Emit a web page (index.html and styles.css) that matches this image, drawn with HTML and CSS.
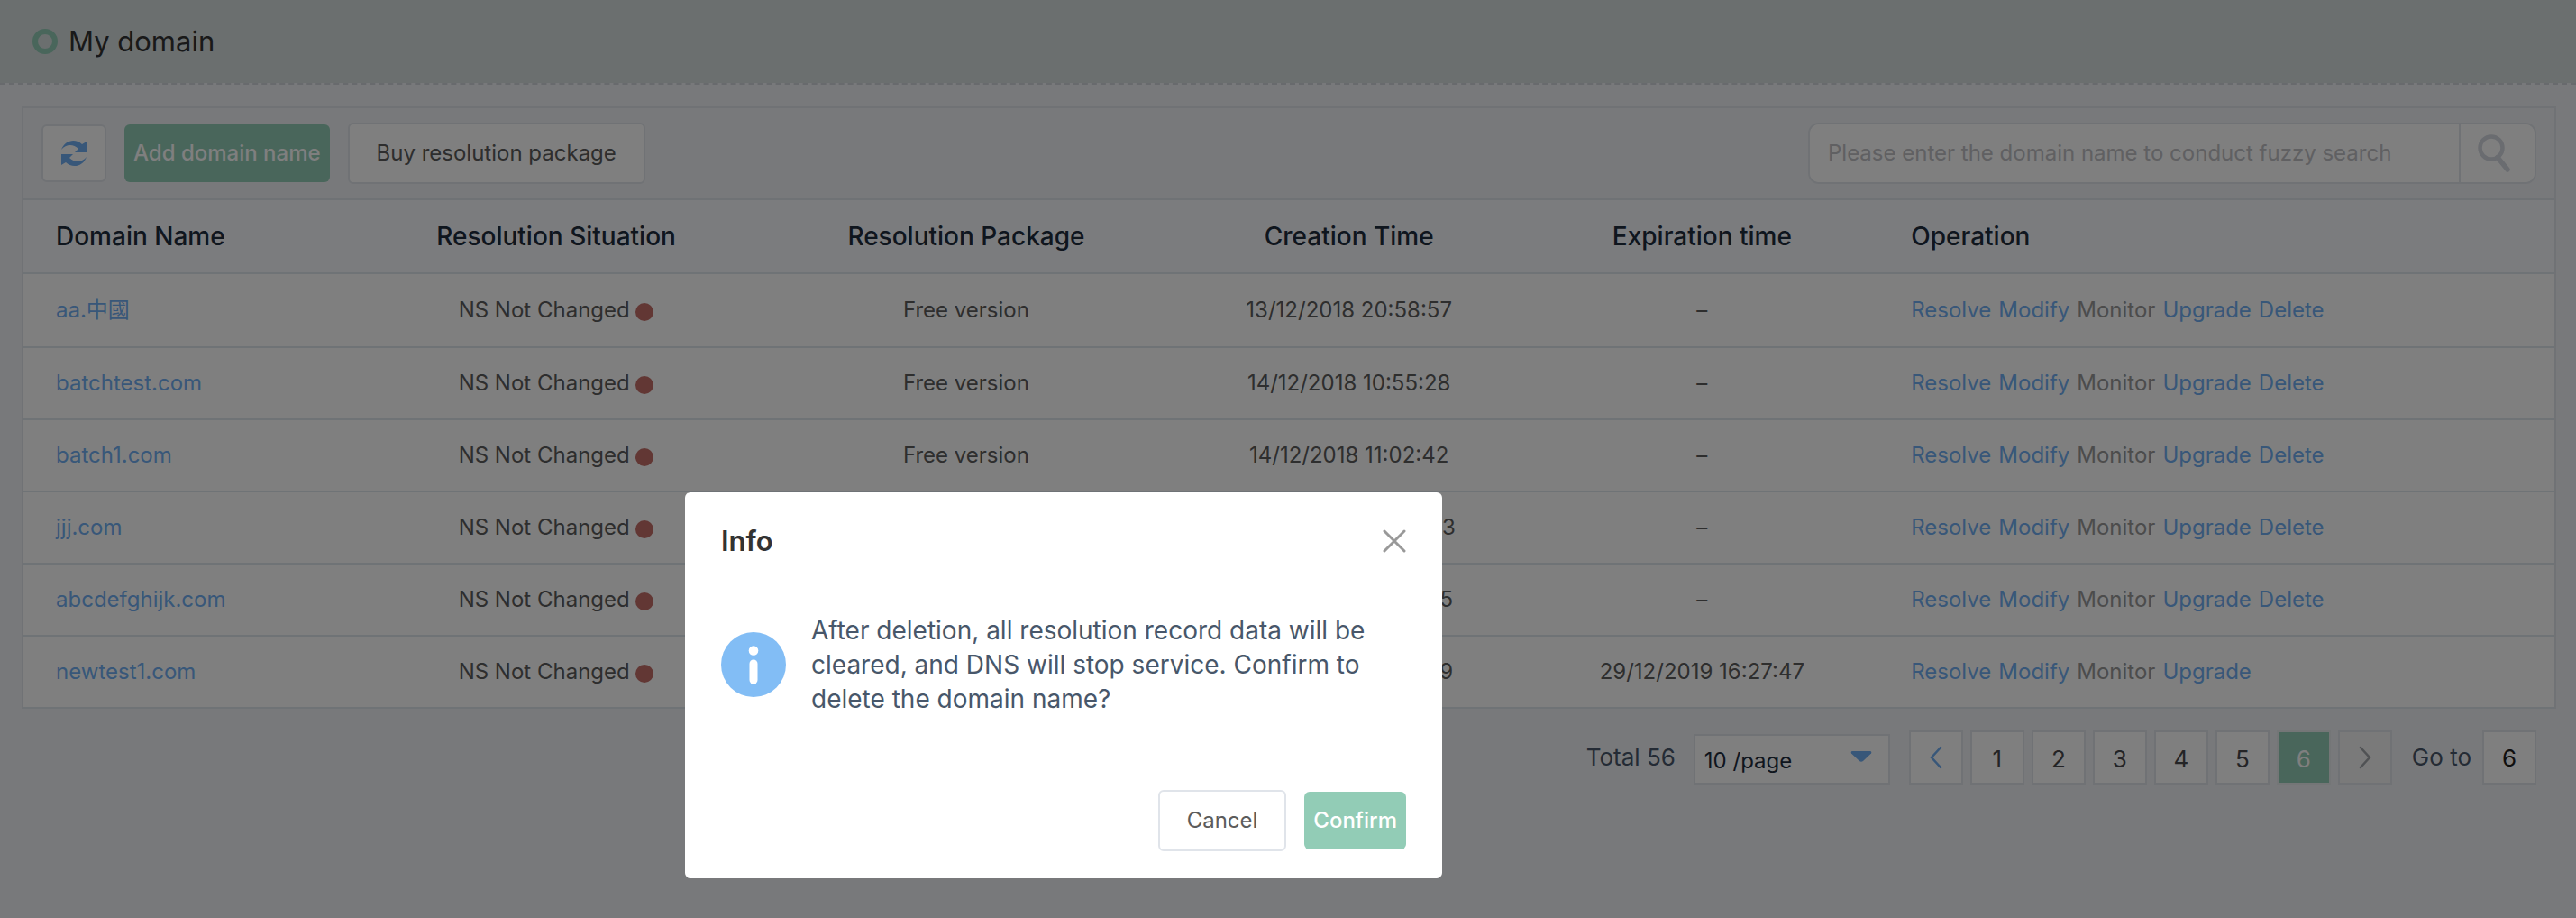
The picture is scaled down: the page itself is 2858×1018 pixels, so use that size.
FILE: index.html
```html
<!DOCTYPE html>
<html lang="en">
<head>
<meta charset="utf-8">
<title>My domain</title>
<link rel="stylesheet" href="styles.css">
</head>
<body>
<header class="page-header">
  <span class="ring"></span>
  <h1 class="page-title">My domain</h1>
</header>
<main class="content">
  <section class="panel">
    <div class="toolbar">
      <button class="btn btn-icon" type="button" aria-label="Refresh">
        <svg width="30" height="32" viewBox="0 0 30 32" fill="currentColor"><path d="M1 12C5 1 17-1 24 6l5-3v12H16l4-4C14 5 6 6 1 12z"/><path d="M29 20C25 31 13 33 6 26l-5 3V17h13l-4 4c6 6 14 5 19-1z"/></svg>
      </button>
      <button class="btn btn-primary" type="button">Add domain name</button>
      <button class="btn btn-plain" type="button">Buy resolution package</button>
      <form class="search">
        <input class="search-input" type="text" aria-label="Search domain" placeholder="Please enter the domain name to conduct fuzzy search">
        <button class="search-btn" type="button" aria-label="Search">
          <svg width="36" height="42" viewBox="0 0 36 42" fill="none" stroke="currentColor"><circle cx="15" cy="15" r="12.500" stroke-width="4.500"/><path d="M22 25.500L33 39" stroke-width="5.500" stroke-linecap="round"/></svg>
        </button>
      </form>
    </div>
    <table class="domains">
      <colgroup><col class="c-name"><col class="c-status"><col class="c-package"><col class="c-time"><col class="c-time"><col></colgroup>
      <thead>
        <tr><th class="start">Domain Name</th><th>Resolution Situation</th><th>Resolution Package</th><th>Creation Time</th><th>Expiration time</th><th class="start">Operation</th></tr>
      </thead>
      <tbody>
        <tr><td class="start"><a href="#">aa.中國</a></td><td>NS Not Changed <i class="dot"></i></td><td>Free version</td><td>13/12/2018 20:58:57</td><td>–</td><td class="start"><span class="ops"><a href="#">Resolve</a><a href="#">Modify</a><span class="off">Monitor</span><a href="#">Upgrade</a><a href="#">Delete</a></span></td></tr>
        <tr><td class="start"><a href="#">batchtest.com</a></td><td>NS Not Changed <i class="dot"></i></td><td>Free version</td><td>14/12/2018 10:55:28</td><td>–</td><td class="start"><span class="ops"><a href="#">Resolve</a><a href="#">Modify</a><span class="off">Monitor</span><a href="#">Upgrade</a><a href="#">Delete</a></span></td></tr>
        <tr><td class="start"><a href="#">batch1.com</a></td><td>NS Not Changed <i class="dot"></i></td><td>Free version</td><td>14/12/2018 11:02:42</td><td>–</td><td class="start"><span class="ops"><a href="#">Resolve</a><a href="#">Modify</a><span class="off">Monitor</span><a href="#">Upgrade</a><a href="#">Delete</a></span></td></tr>
        <tr><td class="start"><a href="#">jjj.com</a></td><td>NS Not Changed <i class="dot"></i></td><td>Free version</td><td>20/12/2018 20:40:53</td><td>–</td><td class="start"><span class="ops"><a href="#">Resolve</a><a href="#">Modify</a><span class="off">Monitor</span><a href="#">Upgrade</a><a href="#">Delete</a></span></td></tr>
        <tr><td class="start"><a href="#">abcdefghijk.com</a></td><td>NS Not Changed <i class="dot"></i></td><td>Free version</td><td>24/12/2018 10:28:45</td><td>–</td><td class="start"><span class="ops"><a href="#">Resolve</a><a href="#">Modify</a><span class="off">Monitor</span><a href="#">Upgrade</a><a href="#">Delete</a></span></td></tr>
        <tr><td class="start"><a href="#">newtest1.com</a></td><td>NS Not Changed <i class="dot"></i></td><td>Free version</td><td>29/12/2018 16:26:49</td><td>29/12/2019 16:27:47</td><td class="start"><span class="ops"><a href="#">Resolve</a><a href="#">Modify</a><span class="off">Monitor</span><a href="#">Upgrade</a></span></td></tr>
      </tbody>
    </table>
  </section>
  <nav class="pager" aria-label="Pages">
    <span class="pager-text">Total 56</span>
    <span class="size">
      <select class="size-select" aria-label="Rows per page"><option>10 /page</option><option>20 /page</option></select>
      <svg class="size-caret" width="24" height="14" viewBox="0 0 24 14" fill="currentColor"><path d="M2 1h20q2 0.500 1 2.500L14 12q-2 1.500-4 0L1 3.500Q0 1.500 2 1z"/></svg>
    </span>
    <div class="pages">
      <button class="page prev" type="button" aria-label="Previous"><svg width="16" height="26" viewBox="0 0 16 26" fill="none" stroke="currentColor" stroke-width="2.500" stroke-linecap="round"><path d="M13 2L3 13l10 11"/></svg></button>
      <button class="page" type="button">1</button>
      <button class="page" type="button">2</button>
      <button class="page" type="button">3</button>
      <button class="page" type="button">4</button>
      <button class="page" type="button">5</button>
      <button class="page current" type="button">6</button>
      <button class="page next" type="button" aria-label="Next" disabled><svg width="16" height="26" viewBox="0 0 16 26" fill="none" stroke="currentColor" stroke-width="2.500" stroke-linecap="round"><path d="M3 2l10 11L3 24"/></svg></button>
    </div>
    <label class="pager-text" for="goto">Go to</label>
    <input class="page goto" id="goto" type="text" value="6">
  </nav>
</main>
<div class="overlay">
  <div class="dialog" role="dialog" aria-labelledby="dialog-title">
    <div class="dialog-head">
      <h2 class="dialog-title" id="dialog-title">Info</h2>
      <button class="close" type="button" aria-label="Close"><svg width="26" height="26" viewBox="0 0 26 26" fill="none" stroke="currentColor" stroke-width="3" stroke-linecap="round"><path d="M2 2l22 22M24 2L2 24"/></svg></button>
    </div>
    <div class="dialog-body">
      <svg class="info" width="72" height="72" viewBox="0 0 72 72"><circle cx="36" cy="36" r="36" fill="#82bdf5"/><circle cx="36" cy="20.500" r="5.300" fill="#fff"/><rect x="31.500" y="30.500" width="9" height="27" rx="4.500" fill="#fff"/></svg>
      <p class="message">After deletion, all resolution record data will be cleared, and DNS will stop service. Confirm to delete the domain name?</p>
    </div>
    <div class="dialog-foot">
      <button class="btn btn-plain" type="button">Cancel</button>
      <button class="btn btn-primary" type="button">Confirm</button>
    </div>
  </div>
</div>
</body>
</html>
```
FILE: styles.css
```css
* {
  box-sizing: border-box;
}

body {
  margin: 0;
  min-height: 100vh;
  background: #f0f2f6;
  color: #5c5c5c;
  font-family: Inter, "Noto Sans CJK SC", "Liberation Sans", sans-serif;
  font-size: 24px;
  line-height: 32px;
}

button,
input,
select {
  margin: 0;
  padding: 0;
  border: 2px solid #e0e4ea;
  background: #fff;
  color: inherit;
  font: inherit;
}

svg {
  display: block;
}

a {
  color: #70aef2;
  text-decoration: none;
}

.page-header {
  display: flex;
  align-items: center;
  gap: 12px;
  height: 94px;
  padding: 0 36px;
  border-bottom: 2px dashed #d0d4da;
  background: #d6dedf;
  background-clip: padding-box;
}

.ring {
  width: 28px;
  height: 28px;
  border: 6px solid #92ccb6;
  border-radius: 50%;
}

.page-title {
  margin: 0;
  color: #333;
  font-size: 31px;
  font-weight: 400;
  line-height: 40px;
}

.content {
  padding: 24px 22px 24px 24px;
}

.panel {
  border: 2px solid #e0e4ea;
  border-bottom: 0;
}

.toolbar {
  display: flex;
  align-items: center;
  gap: 20px;
  padding: 16px 20px;
  border-bottom: 2px solid #dfe4ea;
}

.btn {
  border-radius: 6px;
}

.btn-icon {
  display: grid;
  place-items: center;
  width: 72px;
  height: 64px;
  color: #70aef2;
}

.btn-primary {
  height: 64px;
  padding: 0 10px;
  border: 0;
  background: #92ccb6;
  color: #fff;
  font-weight: 500;
}

.btn-plain {
  height: 68px;
  padding: 0 30px;
}

.search {
  display: flex;
  width: 808px;
  height: 68px;
  margin-left: auto;
  overflow: hidden;
  border: 2px solid #e0e4ea;
  border-radius: 12px;
  background: #fff;
}

.search-input {
  flex: 1;
  padding: 0 20px;
  border: 0;
}

.search-input::placeholder {
  color: #c0c0c4;
}

.search-btn {
  display: grid;
  place-items: center;
  width: 84px;
  padding-right: 8px;
  border-width: 0 0 0 2px;
  color: #d4d8e0;
}

.domains {
  width: 100%;
  table-layout: fixed;
  border-collapse: separate;
  border-spacing: 0;
  background: #fff;
}

.c-name {
  width: 13%;
}

.c-status {
  width: 16.1%;
}

.c-package {
  width: 16.3%;
}

.c-time {
  width: 13.95%;
}

.domains th,
.domains td {
  height: 80px;
  padding: 0;
  border-bottom: 2px solid #dfe6ec;
  text-align: center;
}

.domains th {
  height: 82px;
  background: #f7f9fc;
  color: #1f2d3d;
  font-size: 28px;
  font-weight: 500;
}

.domains tbody tr:first-child td {
  height: 82px;
}

.domains .start {
  padding-left: 36px;
  text-align: left;
}

.dot {
  display: inline-block;
  width: 20px;
  height: 20px;
  border-radius: 50%;
  background: #c46e68;
  vertical-align: -4px;
}

.ops {
  display: flex;
  gap: 8px;
}

.off {
  color: #999;
}

.pager {
  display: flex;
  align-items: center;
  justify-content: flex-end;
  padding: 24px 22px 0;
}

.pager-text {
  color: #48576a;
  font-size: 26px;
}

.size {
  position: relative;
  align-self: flex-end;
  width: 218px;
  margin: 0 21px 0 20px;
}

.size-select {
  width: 100%;
  height: 56px;
  padding: 4px 10px 0;
  appearance: none;
  color: #1f2d3d;
}

.size-caret {
  position: absolute;
  top: 18px;
  right: 20px;
  color: #70aef2;
  pointer-events: none;
}

.pages {
  display: flex;
  gap: 8px;
  margin-right: 22px;
}

.page {
  display: grid;
  place-items: center;
  width: 60px;
  height: 60px;
  padding-top: 4px;
  color: #48484c;
  font-size: 26px;
}

.prev {
  padding: 0;
  color: #70aef2;
}

.next {
  padding: 0;
  background: #f4f4f4;
  color: #a0a4a8;
}

.current {
  border-color: #e8ecef;
  background: #92ccb6;
  color: #fff;
}

.goto {
  margin-left: 12px;
  padding: 0;
  color: #1f1f1f;
  text-align: center;
}

.overlay {
  position: fixed;
  inset: 0;
  padding: 546px 0 0 760px;
  background: rgba(0, 0, 0, 0.5);
}

.dialog {
  width: 840px;
  padding: 30px 40px;
  border-radius: 6px;
  background: #fff;
}

.dialog-head,
.dialog-foot {
  display: flex;
  align-items: center;
  justify-content: space-between;
}

.dialog-title {
  margin: 0;
  color: #333;
  font-size: 31px;
  font-weight: 600;
  line-height: 48px;
}

.close {
  border: 0;
  color: #999;
}

.dialog-body {
  display: flex;
  align-items: center;
  gap: 28px;
  margin: 56px 0 82px;
}

.info {
  flex: none;
}

.message {
  margin: 0;
  color: #48576a;
  font-size: 28px;
  line-height: 38px;
}

.dialog-foot {
  justify-content: flex-end;
  gap: 20px;
}
```
